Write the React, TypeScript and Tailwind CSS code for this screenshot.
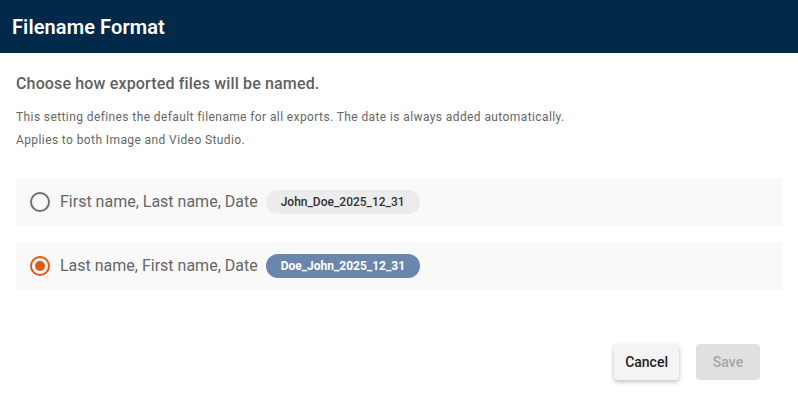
import React, { useState } from 'react';

const options = [
  { id: 'first', label: 'First name, Last name, Date', sample: 'John_Doe_2025_12_31' },
  { id: 'last', label: 'Last name, First name, Date', sample: 'Doe_John_2025_12_31' },
];

export default function App() {
  const [selected, setSelected] = useState('last');

  return (
    <div className="w-[798px] h-[405px] bg-white flex flex-col font-['Roboto',sans-serif]">
      <div className="h-[53px] bg-[#00294a] flex items-center px-3">
        <h1 className="text-white text-[20px] font-semibold tracking-[0.1px]">Filename Format</h1>
      </div>

      <div className="flex-1 flex flex-col px-4">
        <h2 className="mt-[21px] text-[16px] leading-[20px] font-medium text-[#5f5f5f] tracking-[0.15px]">
          Choose how exported files will be named.
        </h2>
        <p className="mt-[15px] text-[12px] leading-[16px] text-[#666] tracking-[0.4px]">
          This setting defines the default filename for all exports. The date is always added automatically.
        </p>
        <p className="mt-[7px] text-[12px] leading-[16px] text-[#666] tracking-[0.4px]">
          Applies to both Image and Video Studio.
        </p>

        <div className="mt-[30px] flex flex-col gap-[16px] w-[767px]">
          {options.map((o) => {
            const active = selected === o.id;
            return (
              <label
                key={o.id}
                onClick={() => setSelected(o.id)}
                className="h-[48px] rounded bg-[#f9f9f9] flex items-center pl-[14px] cursor-pointer"
              >
                <span
                  className={
                    'w-[20px] h-[20px] rounded-full border-2 flex items-center justify-center ' +
                    (active ? 'border-[#e2570f]' : 'border-[#6e6e6e]')
                  }
                >
                  {active && <span className="w-[10px] h-[10px] rounded-full bg-[#e2570f]" />}
                </span>
                <span className="ml-[10px] text-[16px] text-[#666]">{o.label}</span>
                <span
                  className={
                    'ml-[8px] h-[24px] px-[15px] rounded-full flex items-center text-[12px] ' +
                    (active ? 'bg-[#6a86ad] text-white font-bold' : 'bg-[#ececec] text-[#333] font-medium')
                  }
                >
                  {o.sample}
                </span>
              </label>
            );
          })}
        </div>

        <div className="mt-auto mb-[25px] flex justify-end gap-[17px] pr-[22px]">
          <button className="h-[36px] px-[11px] rounded bg-[#f4f4f4] text-[14px] font-medium text-[#222] shadow-[0_2px_4px_rgba(0,0,0,0.25)]">
            Cancel
          </button>
          <button disabled className="h-[36px] w-[64px] rounded bg-[#e0e0e0] text-[14px] font-medium text-[#a6a6a6]">
            Save
          </button>
        </div>
      </div>
    </div>
  );
}
